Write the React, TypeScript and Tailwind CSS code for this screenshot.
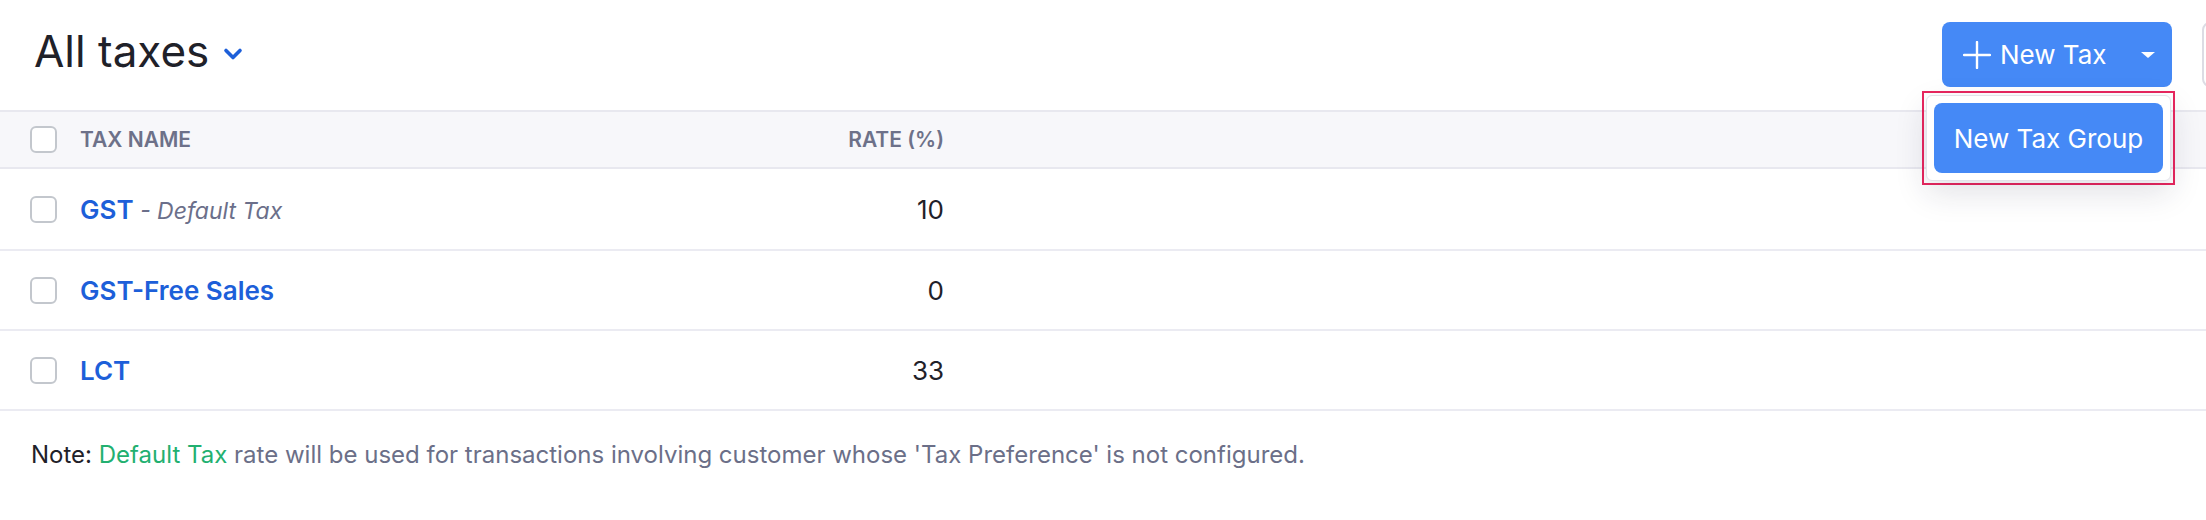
import { useState } from "react";

interface Tax {
  name: string;
  rate: number;
  isDefault?: boolean;
}

const taxes: Tax[] = [
  { name: "GST", rate: 10, isDefault: true },
  { name: "GST-Free Sales", rate: 0 },
  { name: "LCT", rate: 33 },
];

const Checkbox = () => (
  <span className="block w-[27px] h-[27px] shrink-0 rounded-[6px] border-2 border-[#c3c7cd] bg-white" />
);

const ChevronDown = () => (
  <svg width="20" height="14" viewBox="0 0 20 14" fill="none">
    <path
      d="M3 3.5 L10 10.5 L17 3.5"
      stroke="#1d5fd9"
      strokeWidth="3.6"
      strokeLinecap="round"
      strokeLinejoin="round"
    />
  </svg>
);

const PlusIcon = () => (
  <svg width="28" height="28" viewBox="0 0 28 28" fill="none">
    <path d="M14 1 V27 M1 14 H27" stroke="white" strokeWidth="2.4" strokeLinecap="round" />
  </svg>
);

const App = () => {
  const [menuOpen] = useState<boolean>(true);

  return (
    <div className="min-h-[520px] w-full overflow-hidden bg-white font-['Inter','Liberation_Sans',sans-serif]">
      {/* page header */}
      <div className="flex h-[110px] justify-between">
        <div className="mt-[25px] ml-[34px] flex items-start">
          <h1 className="text-[44px] leading-[52px] font-normal text-[#1f2129]">All taxes</h1>
          <span className="ml-[14px] mt-[22px]">
            <ChevronDown />
          </span>
        </div>
        <div className="mt-[22px] mr-[-56px] flex shrink-0 gap-[30px]">
          <div className="relative">
            <button className="flex h-[65px] w-[230px] items-center rounded-[8px] bg-[#4589f6] pl-[21px] text-white">
              <PlusIcon />
              <span className="ml-[9px] text-[26px] leading-none">New Tax</span>
              <span className="ml-auto mr-[17px] block h-0 w-0 border-x-[7px] border-t-[6px] border-x-transparent border-t-white" />
            </button>
            {menuOpen && (
              <div className="absolute top-[69px] right-[-3px] z-10 border-2 border-[#e8265e] p-[2px]">
                <div className="rounded-[6px] border border-[#e3e3ea] bg-white p-[7px] shadow-[0_12px_32px_rgba(30,30,60,0.13)]">
                  <button className="flex h-[70px] w-[229px] items-center justify-center rounded-[8px] bg-[#4589f6] text-[26px] text-white">
                    New Tax Group
                  </button>
                </div>
              </div>
            )}
          </div>
          <div className="h-[65px] w-[60px] shrink-0 rounded-[8px] border-2 border-[#dcdce4] bg-white" />
        </div>
      </div>

      {/* table */}
      <div className="flex h-[59px] items-center border-y-2 border-[#e8e8ef] bg-[#f7f7fa] pl-[30px]">
        <Checkbox />
        <span className="ml-[23px] w-[660px] text-[21px] font-semibold text-[#6d7189]">TAX NAME</span>
        <span className="w-[204px] text-right text-[21px] font-semibold text-[#6d7189]">RATE (%)</span>
      </div>
      {taxes.map((tax, i) => (
        <div
          key={tax.name}
          className={`flex items-center border-b-2 border-[#ebebf2] pl-[30px] ${i === 0 ? "h-[82px]" : "h-[80px]"}`}
        >
          <Checkbox />
          <span className="ml-[23px] w-[660px] text-[26px]">
            <span className="font-semibold text-[#1d5fd9]">{tax.name}</span>
            {tax.isDefault && <span className="text-[23px] italic text-[#6b6f8a]"> - Default Tax</span>}
          </span>
          <span className="w-[204px] text-right text-[26px] text-[#1f2129]">{tax.rate}</span>
        </div>
      ))}

      <p className="pt-[26px] pl-[31px] text-[24px] leading-[36px] text-[#6b6f88]">
        <span className="text-[#1f2129]">Note: </span>
        <span className="text-[#22b070]">Default Tax</span> rate will be used for transactions involving
        customer whose 'Tax Preference' is not configured.
      </p>
    </div>
  );
};

export default App;
